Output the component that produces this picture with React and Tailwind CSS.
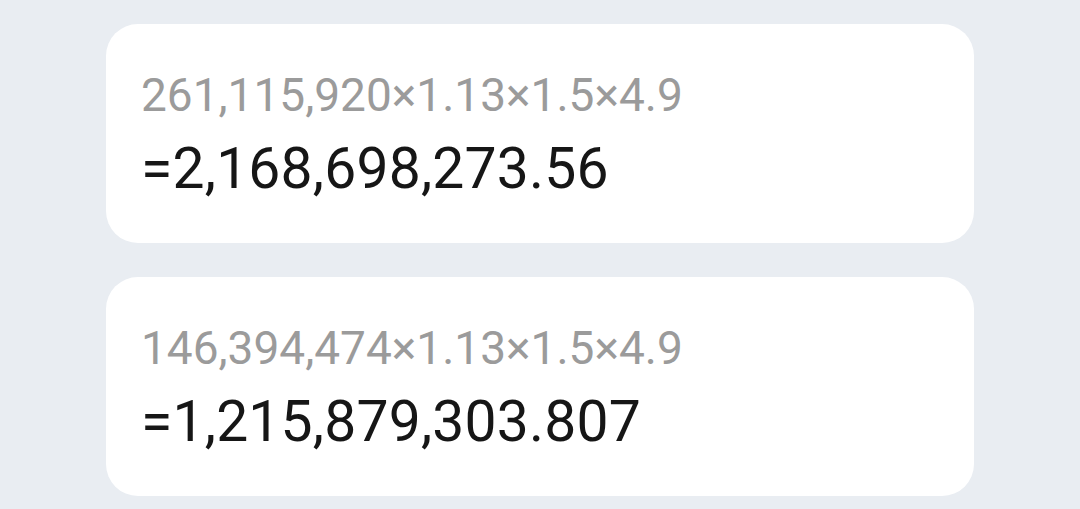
import React from "react";

const rows = [
  { expr: "261,115,920×1.13×1.5×4.9", result: "=2,168,698,273.56" },
  { expr: "146,394,474×1.13×1.5×4.9", result: "=1,215,879,303.807" },
];

export default function App() {
  return (
    <div className="min-h-[509px] w-[1080px] bg-[#e9edf2] pt-6 font-['Roboto',sans-serif]">
      <div className="ml-[106px] flex w-[868px] flex-col gap-[34px]">
        {rows.map((r) => (
          <div
            key={r.expr}
            className="flex h-[219px] flex-col rounded-[32px] bg-white pl-[35px] pt-[48px]"
          >
            <div className="text-[46px] leading-[46px] text-[#9b9b9b]">
              {r.expr}
            </div>
            <div className="mt-[22px] text-[57px] leading-[57px] tracking-[0.2px] text-[#161616]">
              {r.result}
            </div>
          </div>
        ))}
      </div>
    </div>
  );
}
